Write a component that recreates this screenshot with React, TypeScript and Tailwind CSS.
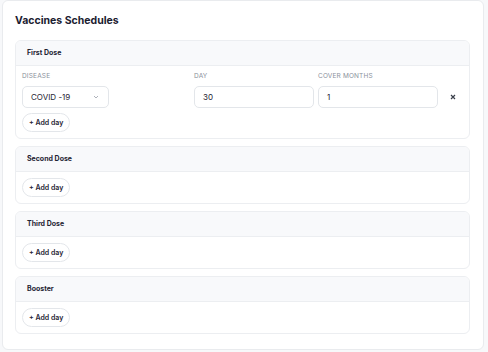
import React from "react";

const font = { fontFamily: "Inter, 'Noto Sans', sans-serif" };

function AddDay() {
  return (
    <button className="h-[19px] px-[6px] rounded-full border border-[#e3e6ea] bg-white text-[7px] font-semibold text-[#1f2433] leading-none flex items-center">
      + Add day
    </button>
  );
}

function Section({ title, children }: { title: string; children?: React.ReactNode }) {
  return (
    <div className="rounded-[6px] border border-[#eceef1] overflow-hidden">
      <div className="h-[25px] bg-[#f8f9fb] border-b border-[#eceef1] flex items-center pl-[11px] text-[7px] font-bold text-[#1f2433]">
        {title}
      </div>
      <div className="px-[6px] pt-[6px] pb-[6px] flex flex-col items-start">{children}</div>
    </div>
  );
}

export default function App() {
  return (
    <div style={font} className="w-[488px] h-[352px] bg-[#f7f8fa] overflow-hidden relative">
      <div className="ml-[2px] w-[482px] h-[350px] bg-white border border-[#e9ebee] rounded-[6px] pl-[12px] pr-[13px] pt-[12px]">
        <div className="text-[10.5px] font-bold text-[#1b2030] leading-[16px] mb-[11px]">Vaccines Schedules</div>
        <div className="flex flex-col gap-[7px]">
          <Section title="First Dose">
            <div className="flex items-end gap-[4px] mb-[5px]">
              <div className="w-[87px] mr-[81px]">
                <div className="text-[6.5px] text-[#8b919c] tracking-wide mb-[6px] h-[8px] leading-[8px]">DISEASE</div>
                <div className="h-[22px] rounded-[5px] border border-[#e3e6ea] flex items-center justify-between px-[8px] text-[8px] text-[#1f2433]">
                  <span>COVID -19</span>
                  <svg width="6" height="4" viewBox="0 0 6 4" className="mr-[1px]"><path d="M1 1l2 2 2-2" fill="none" stroke="#9aa0aa" strokeWidth="0.8" /></svg>
                </div>
              </div>
              <div className="w-[120px]">
                <div className="text-[6.5px] text-[#8b919c] tracking-wide mb-[6px] h-[8px] leading-[8px]">DAY</div>
                <div className="h-[22px] rounded-[5px] border border-[#e3e6ea] flex items-center px-[8px] text-[8px] text-[#1f2433]">30</div>
              </div>
              <div className="w-[120px]">
                <div className="text-[6.5px] text-[#8b919c] tracking-wide mb-[6px] h-[8px] leading-[8px]">COVER MONTHS</div>
                <div className="h-[22px] rounded-[5px] border border-[#e3e6ea] flex items-center px-[8px] text-[8px] text-[#1f2433]">1</div>
              </div>
              <div className="h-[22px] flex items-center ml-[8px]">
                <svg width="6" height="6" viewBox="0 0 6 6"><path d="M1 1l4 4M5 1L1 5" stroke="#3a3f4b" strokeWidth="1.2" /></svg>
              </div>
            </div>
            <AddDay />
          </Section>
          <Section title="Second Dose"><AddDay /></Section>
          <Section title="Third Dose"><AddDay /></Section>
          <Section title="Booster"><AddDay /></Section>
        </div>
      </div>
    </div>
  );
}
